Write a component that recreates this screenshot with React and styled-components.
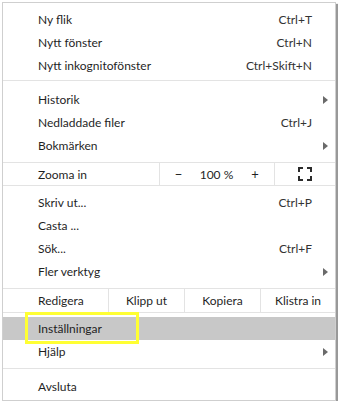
import styled, { createGlobalStyle } from "styled-components";

const GlobalStyle = createGlobalStyle`
  html, body {
    margin: 0;
    padding: 0;
    background: #fff;
  }
  body {
    font-family: Lato, "Open Sans", sans-serif;
    font-size: 12px;
    color: #1f1f1f;
  }
`;

const Menu = styled.div`
  box-sizing: border-box;
  width: 334px;
  margin: 2px 0 0 2px;
  padding: 5px 0 2px;
  background: #fff;
  border: 1px solid #cfcfcf;
  box-shadow: 2px 2px 1px rgba(0, 0, 0, 0.4);
`;

const Item = styled.div`
  position: relative;
  display: flex;
  align-items: center;
  height: 23px;
  padding: 0 7px 0 35px;
  background: ${(p) => (p.$active ? "#c8c8c8" : "transparent")};
`;

const Label = styled.span`
  flex: 1;
  white-space: nowrap;
`;

const Shortcut = styled.span`
  padding-right: 16px;
  color: #333;
`;

const Arrow = styled.span`
  width: 0;
  height: 0;
  border-left: 5px solid #6a6a6a;
  border-top: 4px solid transparent;
  border-bottom: 4px solid transparent;
`;

const Separator = styled.div`
  height: 1px;
  background: #e3e3e3;
  margin: ${(p) => p.$top || 0}px 0 ${(p) => p.$bottom || 0}px;
`;

const ZoomRow = styled.div`
  display: grid;
  grid-template-columns: 1fr 38px 39px 38px 61px;
  height: 22px;
  align-items: stretch;
`;

const EditRow = styled.div`
  display: grid;
  grid-template-columns: 1fr 76px 76px 75px;
  height: 23px;
  align-items: stretch;
`;

const RowLabel = styled.div`
  display: flex;
  align-items: center;
  padding-left: 35px;
`;

const Cell = styled.div`
  display: flex;
  align-items: center;
  justify-content: center;
  font-size: ${(p) => (p.$sign ? "13px" : "12px")};
  border-left: ${(p) => (p.$divider ? "1px solid #e3e3e3" : "none")};
`;

const Highlight = styled.div`
  position: absolute;
  left: 22px;
  top: -5px;
  width: 114px;
  height: 32px;
  box-sizing: border-box;
  border: 3px solid #ffff33;
  pointer-events: none;
`;

const FullscreenIcon = () => (
  <svg width="14" height="14" viewBox="0 0 14 14">
    <path
      d="M1 5V1h4M9 1h4v4M13 9v4H9M5 13H1V9"
      fill="none"
      stroke="#2b2b2b"
      strokeWidth="2"
    />
  </svg>
);

const MenuItem = ({ label, shortcut, submenu, active, children }) => (
  <Item $active={active}>
    <Label>{label}</Label>
    {shortcut && <Shortcut>{shortcut}</Shortcut>}
    {submenu && <Arrow />}
    {children}
  </Item>
);

export default function App() {
  return (
    <>
      <GlobalStyle />
      <Menu>
        <MenuItem label="Ny flik" shortcut="Ctrl+T" />
        <MenuItem label="Nytt fönster" shortcut="Ctrl+N" />
        <MenuItem label="Nytt inkognitofönster" shortcut="Ctrl+Skift+N" />
        <Separator $top={3} $bottom={7} />
        <MenuItem label="Historik" submenu />
        <MenuItem label="Nedladdade filer" shortcut="Ctrl+J" />
        <MenuItem label="Bokmärken" submenu />
        <Separator $top={5} />
        <ZoomRow>
          <RowLabel>Zooma in</RowLabel>
          <Cell $divider $sign>−</Cell>
          <Cell>100 %</Cell>
          <Cell $sign>+</Cell>
          <Cell $divider>
            <FullscreenIcon />
          </Cell>
        </ZoomRow>
        <Separator $bottom={5} />
        <MenuItem label="Skriv ut..." shortcut="Ctrl+P" />
        <MenuItem label="Casta ..." />
        <MenuItem label="Sök..." shortcut="Ctrl+F" />
        <MenuItem label="Fler verktyg" submenu />
        <Separator $top={5} />
        <EditRow>
          <RowLabel>Redigera</RowLabel>
          <Cell $divider>Klipp ut</Cell>
          <Cell $divider>Kopiera</Cell>
          <Cell $divider>Klistra in</Cell>
        </EditRow>
        <Separator $bottom={4} />
        <MenuItem label="Inställningar" active>
          <Highlight />
        </MenuItem>
        <MenuItem label="Hjälp" submenu />
        <Separator $top={5} $bottom={6} />
        <MenuItem label="Avsluta" />
      </Menu>
    </>
  );
}
